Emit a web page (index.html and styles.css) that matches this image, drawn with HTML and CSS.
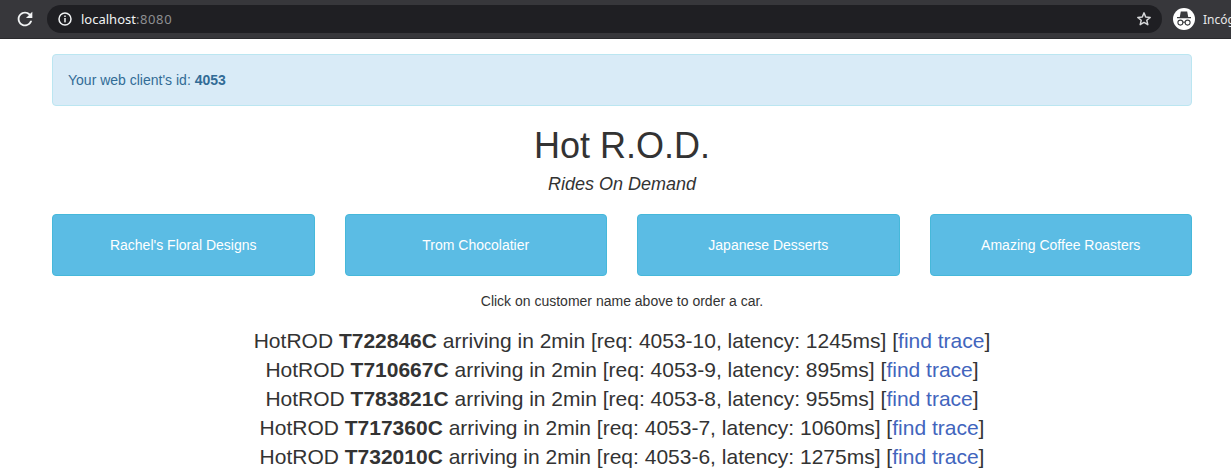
FILE: index.html
```html
<!DOCTYPE html>
<html lang="en">
<head>
<meta charset="utf-8">
<title>Hot R.O.D.</title>
<link rel="stylesheet" href="styles.css">
</head>
<body>
<header class="toolbar">
  <svg class="reload" viewBox="0 0 24 24" width="22" height="22"><path d="M17.65 6.35C16.2 4.9 14.21 4 12 4c-4.42 0-7.99 3.58-7.99 8s3.57 8 7.99 8c3.73 0 6.84-2.55 7.73-6h-2.08c-.82 2.33-3.04 4-5.65 4-3.31 0-6-2.69-6-6s2.69-6 6-6c1.66 0 3.14.69 4.22 1.78L13 11h7V4l-2.35 2.35z" fill="#f1f3f4"/></svg>
  <div class="omnibox">
    <svg class="info" viewBox="0 0 14 14" width="14" height="14"><circle cx="7" cy="7" r="6" fill="none" stroke="#f1f3f4" stroke-width="1.5"/><rect x="6.25" y="6" width="1.5" height="4.4" fill="#f1f3f4"/><rect x="6.25" y="3.5" width="1.5" height="1.5" fill="#f1f3f4"/></svg>
    <span class="url">localhost<span class="port">:8080</span></span>
    <svg class="star" viewBox="0 0 16 16" width="16" height="16"><path d="M8 1.9 L9.7 6 L14.2 6.4 L10.8 9.3 L11.8 13.7 L8 11.4 L4.2 13.7 L5.2 9.3 L1.8 6.4 L6.3 6 Z" fill="none" stroke="#d6d7d9" stroke-width="1.5" stroke-linejoin="round"/></svg>
  </div>
  <div class="profile">
    <svg class="avatar" viewBox="0 0 22 22" width="22" height="22"><circle cx="11" cy="11" r="11" fill="#fff"/><path d="M7.8 3.6 h6.4 l1 5.3 h2.8 v1.4 H4 V8.9 h2.8 z" fill="#3a3b3e"/><circle cx="7.4" cy="14.6" r="2.5" fill="none" stroke="#3a3b3e" stroke-width="1.1"/><circle cx="14.6" cy="14.6" r="2.5" fill="none" stroke="#3a3b3e" stroke-width="1.1"/><path d="M9.8 14.2 h2.4" stroke="#3a3b3e" stroke-width="1.1"/></svg>
    <span class="profile-name">Incógnito</span>
  </div>
</header>
<main class="container">
  <div class="alert">Your web client's id: <strong>4053</strong></div>
  <div class="title">
    <h1>Hot R.O.D.</h1>
    <p class="subtitle">Rides On Demand</p>
  </div>
  <div class="customers">
    <button class="btn" type="button">Rachel's Floral Designs</button>
    <button class="btn" type="button">Trom Chocolatier</button>
    <button class="btn" type="button">Japanese Desserts</button>
    <button class="btn" type="button">Amazing Coffee Roasters</button>
  </div>
  <p class="hint">Click on customer name above to order a car.</p>
  <div class="rides">
    <div>HotROD <b>T722846C</b> arriving in 2min [req: 4053-10, latency: 1245ms] [<a href="#">find trace</a>]</div>
    <div>HotROD <b>T710667C</b> arriving in 2min [req: 4053-9, latency: 895ms] [<a href="#">find trace</a>]</div>
    <div>HotROD <b>T783821C</b> arriving in 2min [req: 4053-8, latency: 955ms] [<a href="#">find trace</a>]</div>
    <div>HotROD <b>T717360C</b> arriving in 2min [req: 4053-7, latency: 1060ms] [<a href="#">find trace</a>]</div>
    <div>HotROD <b>T732010C</b> arriving in 2min [req: 4053-6, latency: 1275ms] [<a href="#">find trace</a>]</div>
  </div>
</main>
</body>
</html>
```
FILE: styles.css
```css
* { box-sizing: border-box; }
html, body { margin: 0; height: 100%; overflow: hidden; }
body {
  background: #fff;
  color: #333;
  font: 14px/20px "Liberation Sans", Arial, sans-serif;
}
.toolbar {
  height: 39px;
  background: #37373b;
  border-bottom: 1px solid #2a2a2d;
  display: flex;
  align-items: center;
  padding: 0 0 0 14px;
  overflow: hidden;
}
.reload { flex: none; }
.omnibox {
  margin-left: 11px;
  width: 1115px;
  flex: none;
  height: 28px;
  border-radius: 14px;
  background: #1f1f23;
  display: flex;
  align-items: center;
  padding: 0 10px 0 11px;
}
.url {
  margin-left: 9px;
  font: 13px "Noto Sans", "Open Sans", sans-serif;
  color: #f1f3f4;
  flex: 1;
}
.port { color: #8e8f92; letter-spacing: 0.6px; }
.profile {
  display: flex;
  align-items: center;
  margin-left: 11px;
  flex: none;
}
.profile-name {
  margin-left: 8px;
  font: 12px "Noto Sans", "Open Sans", sans-serif;
  color: #e8e8ea;
}
.container {
  width: 1140px;
  margin-left: 52px;
  padding-top: 15px;
}
.alert {
  background: #d9ebf7;
  border: 1px solid #bbe6f1;
  border-radius: 4px;
  color: #326c96;
  padding: 15px;
}
.title { text-align: center; }
h1 {
  margin: 20px 0 0;
  font-size: 36px;
  font-weight: 500;
  line-height: 39.6px;
}
.subtitle {
  margin: 6px 0 0;
  font-size: 18px;
  font-style: italic;
  line-height: 25px;
}
.customers {
  display: grid;
  grid-template-columns: repeat(4, 1fr);
  column-gap: 30px;
  margin-top: 17px;
}
.btn {
  height: 62px;
  background: #5bbce4;
  border: 1px solid #46b8da;
  border-radius: 4px;
  color: #fff;
  font: inherit;
  padding: 0;
}
.hint {
  margin: 15px 0 0;
  text-align: center;
}
.rides {
  margin-top: 15px;
  text-align: center;
  font-size: 21px;
  font-weight: 300;
  line-height: 29px;
}
.rides b { font-weight: 700; }
.rides a { color: #4265bd; text-decoration: none; }
```
